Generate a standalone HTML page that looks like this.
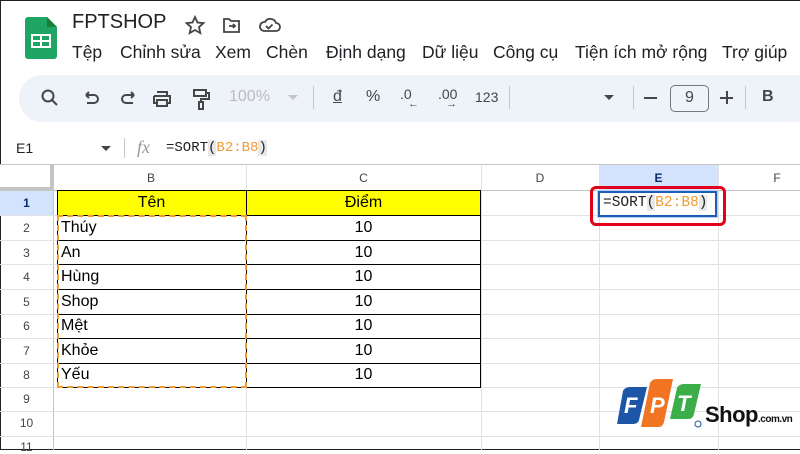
<!DOCTYPE html>
<html><head><meta charset="utf-8"><style>
*{margin:0;padding:0;box-sizing:border-box}
body{width:800px;height:450px;overflow:hidden;background:#fff;font-family:"Liberation Sans",Arial,sans-serif;position:relative;color:#202124}
.a{position:absolute}
.menu{top:42px;font-size:17.5px;color:#202124}
.tb{top:88px;font-size:16px;color:#444746}
.vl{position:absolute;background:#e1e1e1;width:1px}
.hl{position:absolute;background:#e1e1e1;height:1px}
.rn{position:absolute;left:0;width:53px;text-align:center;font-size:12px;color:#444}
.cell{position:absolute;font-size:16px;color:#000}
.mono{font-family:"Liberation Mono",monospace}
</style></head><body>
<div class="a" style="left:0;top:0;width:800px;height:450px;border-left:1px solid #222;border-bottom:1px solid #222;border-top:1px solid #222"></div>
<svg class="a" style="left:25px;top:17px" width="32" height="42" viewBox="0 0 32 42"><path d="M3 0h19l10 10v29a3 3 0 0 1-3 3H3a3 3 0 0 1-3-3V3a3 3 0 0 1 3-3z" fill="#1fa463"/><path d="M22 0l10 10h-10z" fill="#188038"/><rect x="6" y="17" width="20" height="14" fill="#fff"/><rect x="8" y="19" width="7" height="4" fill="#1fa463"/><rect x="17" y="19" width="7" height="4" fill="#1fa463"/><rect x="8" y="25" width="7" height="4" fill="#1fa463"/><rect x="17" y="25" width="7" height="4" fill="#1fa463"/></svg>
<div class="a" style="left:72px;top:11px;font-size:20px">FPTSHOP</div>
<svg class="a" style="left:185px;top:14px" width="110" height="22" fill="none" stroke="#444" stroke-width="1.8"><path d="M10 3l2.5 5.5 6 .6-4.5 4 1.3 6-5.3-3.1-5.3 3.1 1.3-6-4.5-4 6-.6z"/><path d="M39 5h5l2 2h8v11H39z M44 12h6 M48 10l2 2-2 2"/><path d="M79 17h12a4 4 0 0 0 0-8 6 6 0 0 0-11-1 4.5 4.5 0 0 0-1 9z M81 12l2.5 2.5 4-4"/></svg>
<div class="a menu" style="left:72px">Tệp</div>
<div class="a menu" style="left:120px">Chỉnh sửa</div>
<div class="a menu" style="left:215px">Xem</div>
<div class="a menu" style="left:266px">Chèn</div>
<div class="a menu" style="left:326px">Định dạng</div>
<div class="a menu" style="left:422px">Dữ liệu</div>
<div class="a menu" style="left:493px">Công cụ</div>
<div class="a menu" style="left:575px">Tiện ích mở rộng</div>
<div class="a menu" style="left:722px">Trợ giúp</div>
<div class="a" style="left:19px;top:75px;width:800px;height:47px;background:#eef2f9;border-radius:24px"></div>
<svg class="a" style="left:38px;top:86px" width="180" height="24" fill="none" stroke="#444746" stroke-width="2"><circle cx="10" cy="10" r="5.5"/><path d="M14 14l5 5"/><path d="M48 9h8a4 4 0 0 1 0 8h-7 M48 9l3-3 M48 9l3 3"/><path d="M96 9h-8a4 4 0 0 0 0 8h7 M96 9l-3-3 M96 9l-3 3"/><path d="M119 6h10v4 M116 10h16v7h-3 M119 17h-3v-7 M119 14h10v6h-10z"/><path d="M156 4h12v6h-12z M168 7h3v6h-8v3 M161 16h4v7h-4z"/></svg>
<div class="a tb" style="left:229px;color:#bcbcbc">100%</div>
<div class="a" style="left:288px;top:95px;border:5px solid transparent;border-top-color:#c4c4c4"></div>
<div class="vl" style="left:313px;top:86px;height:23px;background:#c7c7c7"></div>
<div class="a tb" style="left:333px;text-decoration:underline">đ</div>
<div class="a tb" style="left:366px">%</div>
<div class="a" style="left:400px;top:86px;font-size:14px;color:#444746">.0</div>
<div class="a" style="left:408px;top:98px;font-size:11px;color:#444746">←</div>
<div class="a" style="left:438px;top:86px;font-size:14px;color:#444746">.00</div>
<div class="a" style="left:446px;top:98px;font-size:11px;color:#444746">→</div>
<div class="a" style="left:475px;top:89px;font-size:14px;color:#444746">123</div>
<div class="vl" style="left:509px;top:86px;height:23px;background:#c7c7c7"></div>
<div class="a" style="left:604px;top:95px;border:5.5px solid transparent;border-top-color:#444746"></div>
<div class="vl" style="left:633px;top:86px;height:23px;background:#c7c7c7"></div>
<div class="a" style="left:644px;top:97px;width:13px;height:2px;background:#444746"></div>
<div class="a" style="left:670px;top:85px;width:39px;height:27px;border:1.5px solid #747775;border-radius:5px;text-align:center;font-size:16px;line-height:24px;color:#444746">9</div>
<div class="a" style="left:720px;top:97px;width:13px;height:2px;background:#444746"></div>
<div class="a" style="left:725.5px;top:91px;width:2px;height:13px;background:#444746"></div>
<div class="vl" style="left:745px;top:86px;height:23px;background:#c7c7c7"></div>
<div class="a tb" style="left:762px;font-weight:bold;color:#444746">B</div>
<div class="a" style="left:16px;top:140px;font-size:14px">E1</div>
<div class="a" style="left:101px;top:146px;border:5px solid transparent;border-top-color:#444"></div>
<div class="vl" style="left:124px;top:138px;height:20px;background:#c7c7c7"></div>
<div class="a" style="left:137px;top:137px;font-size:18px;font-style:italic;font-family:'Liberation Serif',serif;color:#999">fx</div>
<div class="a mono" style="left:166px;top:140px;font-size:14px">=SORT<span style="background:#e8e8e8">(</span><span style="color:#f09a36">B2:B8</span><span style="background:#e8e8e8">)</span></div>
<div class="hl" style="left:0;top:164px;width:800px;background:#c4c4c4"></div>
<div class="a" style="left:0;top:165px;width:800px;height:25px;background:#fff"></div>
<div class="a" style="left:599px;top:165px;width:119px;height:25px;background:#d3e3fd"></div>
<div class="a" style="left:0;top:190px;width:53px;height:25px;background:#d3e3fd"></div>
<div class="a" style="left:50px;top:165px;width:4px;height:25px;background:#c4c4c4"></div>
<div class="a" style="left:0;top:187px;width:54px;height:3px;background:#c4c4c4"></div>
<div class="vl" style="left:53px;top:190px;height:260px;background:#c4c4c4"></div>
<div class="vl" style="left:246px;top:165px;height:285px"></div>
<div class="vl" style="left:481px;top:165px;height:285px"></div>
<div class="vl" style="left:599px;top:165px;height:285px"></div>
<div class="vl" style="left:718px;top:165px;height:285px"></div>
<div class="hl" style="left:0;top:190px;width:800px;background:#c4c4c4"></div>
<div class="a" style="left:56px;top:171px;width:190px;text-align:center;font-size:12px;color:#444">B</div>
<div class="a" style="left:246px;top:171px;width:235px;text-align:center;font-size:12px;color:#444">C</div>
<div class="a" style="left:481px;top:171px;width:118px;text-align:center;font-size:12px;color:#444">D</div>
<div class="a" style="left:599px;top:171px;width:119px;text-align:center;font-size:12px;color:#0b2a6b;font-weight:bold">E</div>
<div class="a" style="left:718px;top:171px;width:118px;text-align:center;font-size:12px;color:#444">F</div>
<div class="hl" style="left:0;top:215px;width:800px"></div>
<div class="hl" style="left:0;top:240px;width:800px"></div>
<div class="hl" style="left:0;top:264px;width:800px"></div>
<div class="hl" style="left:0;top:289px;width:800px"></div>
<div class="hl" style="left:0;top:314px;width:800px"></div>
<div class="hl" style="left:0;top:338px;width:800px"></div>
<div class="hl" style="left:0;top:363px;width:800px"></div>
<div class="hl" style="left:0;top:387px;width:800px"></div>
<div class="hl" style="left:0;top:411px;width:800px"></div>
<div class="hl" style="left:0;top:436px;width:800px"></div>
<div class="rn" style="top:196px;color:#0b2a6b;font-weight:bold">1</div>
<div class="rn" style="top:221px">2</div>
<div class="rn" style="top:246px">3</div>
<div class="rn" style="top:270px">4</div>
<div class="rn" style="top:295px">5</div>
<div class="rn" style="top:319px">6</div>
<div class="rn" style="top:344px">7</div>
<div class="rn" style="top:368px">8</div>
<div class="rn" style="top:392px">9</div>
<div class="rn" style="top:416px">10</div>
<div class="rn" style="top:440px">11</div>
<div class="a" style="left:57px;top:191px;width:424px;height:24px;background:#ffff00"></div>
<div class="a" style="left:57px;top:190px;width:424px;height:198px;border:1px solid #000"></div>
<div class="vl" style="left:246px;top:190px;height:198px;background:#000"></div>
<div class="hl" style="left:57px;top:215px;width:424px;background:#000"></div>
<div class="hl" style="left:57px;top:240px;width:424px;background:#000"></div>
<div class="hl" style="left:57px;top:264px;width:424px;background:#000"></div>
<div class="hl" style="left:57px;top:289px;width:424px;background:#000"></div>
<div class="hl" style="left:57px;top:314px;width:424px;background:#000"></div>
<div class="hl" style="left:57px;top:338px;width:424px;background:#000"></div>
<div class="hl" style="left:57px;top:363px;width:424px;background:#000"></div>
<div class="a" style="left:57px;top:215px;width:190px;height:173px;border:2px dashed #f29b2e"></div>
<div class="cell" style="left:57px;top:194px;width:189px;text-align:center">Tên</div>
<div class="cell" style="left:246px;top:194px;width:235px;text-align:center">Điểm</div>
<div class="cell" style="left:61px;top:219px">Thúy</div>
<div class="cell" style="left:61px;top:244px">An</div>
<div class="cell" style="left:61px;top:268px">Hùng</div>
<div class="cell" style="left:61px;top:293px">Shop</div>
<div class="cell" style="left:61px;top:317px">Mệt</div>
<div class="cell" style="left:61px;top:342px">Khỏe</div>
<div class="cell" style="left:61px;top:366px">Yếu</div>
<div class="cell" style="left:246px;top:219px;width:235px;text-align:center">10</div>
<div class="cell" style="left:246px;top:244px;width:235px;text-align:center">10</div>
<div class="cell" style="left:246px;top:268px;width:235px;text-align:center">10</div>
<div class="cell" style="left:246px;top:293px;width:235px;text-align:center">10</div>
<div class="cell" style="left:246px;top:317px;width:235px;text-align:center">10</div>
<div class="cell" style="left:246px;top:342px;width:235px;text-align:center">10</div>
<div class="cell" style="left:246px;top:366px;width:235px;text-align:center">10</div>
<div class="a" style="left:598px;top:191px;width:119px;height:26px;background:#fff;border:2px solid #1a5fb4;box-shadow:0 0 0 1px #bcd0f5"></div>
<div class="a mono" style="left:603px;top:195px;font-size:14.5px">=SORT<span style="background:#e8e8e8">(</span><span style="color:#f09a36">B2:B8</span><span style="background:#e8e8e8">)</span></div>
<div class="a" style="left:590px;top:186px;height:40px;border:3px solid #e2001a;border-radius:6px;width:136px"></div>
<svg class="a" style="left:614px;top:379px" width="90" height="55" viewBox="0 0 90 55"><path d="M9 12q2-4 7-4h17l-8 33q-1 4-6 4H3z" fill="#1d56a6"/><path d="M36 4q2-4 7-4h16l-9 43q-1 5-6 5H27z" fill="#f07422"/><path d="M63 9q2-4 7-4h17l-7 30q-1 5-6 5H56z" fill="#3cae49"/><text x="10" y="34" font-family="Liberation Sans" font-weight="bold" font-style="italic" font-size="22" fill="#fff">F</text><text x="36" y="34" font-family="Liberation Sans" font-weight="bold" font-style="italic" font-size="22" fill="#fff">P</text><text x="63" y="32" font-family="Liberation Sans" font-weight="bold" font-style="italic" font-size="22" fill="#fff">T</text><circle cx="84" cy="45" r="3" fill="none" stroke="#1d56a6"/></svg>
<div class="a" style="left:705px;top:402px;font-size:22px;font-weight:bold;color:#111;letter-spacing:-0.5px">Shop<span style="font-size:10px">.com.vn</span></div>
</body></html>
